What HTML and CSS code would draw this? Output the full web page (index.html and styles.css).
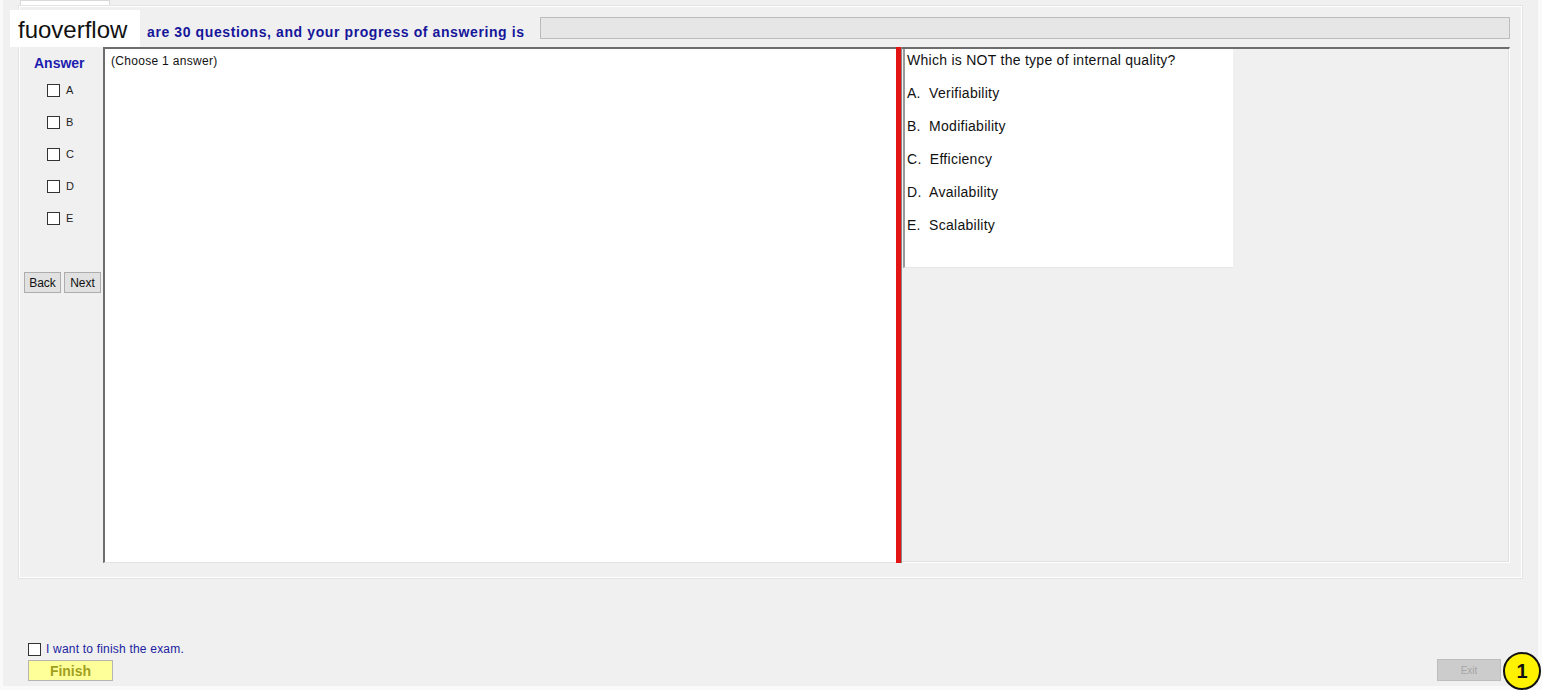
FILE: index.html
```html
<!DOCTYPE html>
<html lang="en">
<head>
    <meta charset="UTF-8">
    <title>Exam</title>
    <link rel="stylesheet" href="styles.css">
</head>
<body>
    <div class="window">
        <div class="tabs"><div class="tab"></div></div>
        <div class="tabpage">
            <div class="header">
                <span class="info">are 30 questions, and your progress of answering is</span>
                <div class="progress"></div>
            </div>
            <div class="content">
                <div class="answer-col">
                    <div class="answer-title">Answer</div>
                    <ul class="choices">
                        <li><span class="box"></span>A</li>
                        <li><span class="box"></span>B</li>
                        <li><span class="box"></span>C</li>
                        <li><span class="box"></span>D</li>
                        <li><span class="box"></span>E</li>
                    </ul>
                    <div class="nav">
                        <button class="btn">Back</button>
                        <button class="btn">Next</button>
                    </div>
                </div>
                <div class="main-pane">(Choose 1 answer)</div>
                <div class="splitter"></div>
                <div class="question-pane">
                    <div class="question">
                        <p>Which is NOT the type of internal quality?</p>
                        <p>A.&nbsp; Verifiability</p>
                        <p>B.&nbsp; Modifiability</p>
                        <p>C.&nbsp; Efficiency</p>
                        <p>D.&nbsp; Availability</p>
                        <p>E.&nbsp; Scalability</p>
                    </div>
                </div>
            </div>
        </div>
        <div class="footer">
            <label class="finish-check"><span class="box"></span>I want to finish the exam.</label>
            <div class="footer-row">
                <button class="finish">Finish</button>
                <button class="exit">Exit</button>
            </div>
        </div>
    </div>
    <div class="watermark">fuoverflow</div>
    <div class="badge">1</div>
</body>
</html>
```

FILE: styles.css
```css
body {
    margin: 0;
    background-color: #fafafa;
    font-family: "Liberation Sans", Arial, sans-serif;
    width: 1542px;
    height: 690px;
    overflow: hidden;
}
.window {
    margin-left: 3px;
    width: 1535px;
    height: 686px;
    background-color: #f0f0f0;
    display: flex;
    flex-direction: column;
}
.tabs {
    height: 6px;
    display: flex;
}
.tab {
    margin-left: 17px;
    width: 88px;
    height: 6px;
    background-color: #fff;
    border: 1px solid #d9d9d9;
    border-bottom: none;
}
.tabpage {
    margin-left: 16px;
    width: 1486px;
    height: 570px;
    border: 1px solid #fff;
    box-shadow: 0 0 0 1px #e3e3e3;
    padding: 0 11px 0 4px;
    display: flex;
    flex-direction: column;
}
.header {
    height: 40px;
    display: flex;
    padding-left: 123px;
}
.info {
    margin-top: 17px;
    font-size: 14px;
    font-weight: bold;
    line-height: 16px;
    letter-spacing: 0.6px;
    color: #16169a;
    white-space: nowrap;
}
.progress {
    flex: 1;
    margin: 10px 0 0 15px;
    height: 20px;
    background-color: #e6e6e6;
    border: 1px solid #bcbcbc;
}
.content {
    height: 516px;
    display: flex;
}
.answer-col {
    width: 79px;
}
.answer-title {
    padding: 8px 0 0 10px;
    font-size: 14px;
    line-height: 16px;
    font-weight: bold;
    color: #1c1cae;
}
.choices {
    list-style: none;
    margin: 11px 0 0 0;
    padding: 0 0 0 23px;
}
.choices li {
    height: 16px;
    margin-bottom: 16px;
    display: flex;
    align-items: center;
    font-size: 11px;
    color: #222;
}
.box {
    display: inline-block;
    width: 11px;
    height: 11px;
    border: 1px solid #333;
    background-color: #fff;
    margin-right: 6px;
}
.nav {
    margin-top: 46px;
    display: flex;
    gap: 3px;
}
.btn {
    width: 37px;
    height: 21px;
    padding: 0;
    background-color: #e1e1e1;
    border: 1px solid #adadad;
    font-family: "Liberation Sans", Arial, sans-serif;
    font-size: 12px;
    color: #111;
}
.main-pane {
    width: 785px;
    background-color: #fff;
    border-top: 2px solid #6d6d6d;
    border-left: 2px solid #6d6d6d;
    border-bottom: 1px solid #e3e3e3;
    padding: 5px 0 0 6px;
    font-size: 12px;
    letter-spacing: 0.3px;
    color: #111;
}
.splitter {
    width: 5px;
    background-color: #e31414;
    border-right: 1px solid #8a8a8a;
}
.question-pane {
    flex: 1;
    border-top: 2px solid #6d6d6d;
    border-right: 1px solid #fff;
    border-bottom: 1px solid #fff;
    box-shadow: inset -1px -1px 0 #e0e0e0;
}
.question {
    width: 330px;
    height: 219px;
    margin-left: 1px;
    background-color: #fff;
    border-left: 2px solid #9a9a9a;
    border-bottom: 1px solid #e6e6e6;
    padding: 3px 0 0 2px;
    box-sizing: border-box;
}
.question p {
    margin: 0 0 17px 0;
    font-size: 14px;
    line-height: 16px;
    letter-spacing: 0.27px;
    color: #111;
}
.footer {
    padding: 0 37px 0 25px;
    display: flex;
    flex-direction: column;
}
.finish-check {
    margin-top: 64px;
    display: flex;
    align-items: center;
    font-size: 12px;
    letter-spacing: 0.2px;
    color: #2222a0;
}
.finish-check .box {
    margin-right: 5px;
}
.footer-row {
    margin-top: 4px;
    display: flex;
    justify-content: space-between;
    align-items: flex-start;
}
.finish {
    width: 85px;
    height: 21px;
    padding: 0;
    background-color: #ffff99;
    border: 1px solid #b5b5b5;
    font-family: "Liberation Sans", Arial, sans-serif;
    font-size: 14px;
    font-weight: bold;
    color: #a0a01e;
}
.exit {
    width: 64px;
    height: 22px;
    margin-top: -1px;
    padding: 0;
    background-color: #cccccc;
    border: 1px solid #bdbdbd;
    font-family: "Liberation Sans", Arial, sans-serif;
    font-size: 10px;
    color: #a6a6a6;
}
.watermark {
    position: absolute;
    left: 10px;
    top: 10px;
    width: 130px;
    height: 37px;
    background-color: #fff;
    font-size: 24px;
    line-height: 40px;
    padding-left: 8px;
    box-sizing: border-box;
    color: #111;
}
.badge {
    position: absolute;
    left: 1503px;
    top: 652px;
    width: 34px;
    height: 34px;
    border: 2px solid #111;
    border-radius: 50%;
    background-color: #fff200;
    display: flex;
    align-items: center;
    justify-content: center;
    font-size: 20px;
    font-weight: bold;
    color: #111;
}
```
